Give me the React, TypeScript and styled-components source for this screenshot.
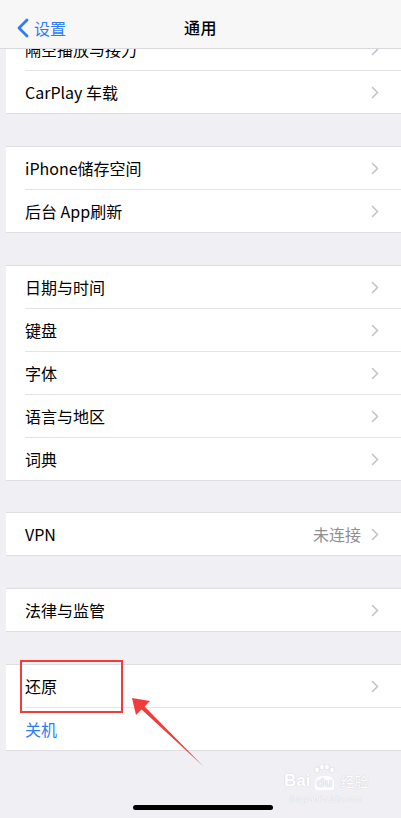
import React from "react";
import styled, { createGlobalStyle } from "styled-components";

type RowItem = {
  label: string;
  detail?: string;
  action?: boolean;
};

type GroupItem = {
  gap: number;
  rows: RowItem[];
};

const groups: GroupItem[] = [
  { gap: 32, rows: [{ label: "iPhone储存空间" }, { label: "后台 App刷新" }] },
  {
    gap: 32,
    rows: [
      { label: "日期与时间" },
      { label: "键盘" },
      { label: "字体" },
      { label: "语言与地区" },
      { label: "词典" },
    ],
  },
  { gap: 31, rows: [{ label: "VPN", detail: "未连接" }] },
  { gap: 32, rows: [{ label: "法律与监管" }] },
  { gap: 32, rows: [{ label: "还原" }, { label: "关机", action: true }] },
];

const GlobalStyle = createGlobalStyle`
  html, body {
    margin: 0;
    padding: 0;
    background: #efeff4;
  }
  * {
    box-sizing: border-box;
  }
`;

const Chevron = () => (
  <ChevronIcon width="8" height="13" viewBox="0 0 8 13">
    <path d="M1.5 1.5 L6.5 6.5 L1.5 11.5" fill="none" stroke="#c4c4c8" strokeWidth="1.6" strokeLinecap="round" strokeLinejoin="round" />
  </ChevronIcon>
);

const App = () => {
  return (
    <Page>
      <GlobalStyle />
      <NavBar>
        <BackButton>
          <svg width="14" height="20" viewBox="0 0 14 20">
            <path d="M11 2 L3 10 L11 18" fill="none" stroke="#2f7cf6" strokeWidth="2.8" strokeLinecap="round" strokeLinejoin="round" />
          </svg>
          <span>设置</span>
        </BackButton>
        <Title>通用</Title>
      </NavBar>

      <Group $gap={0} $first>
        <ClippedRow>
          <RowInner>
            <Label>隔空播放与接力</Label>
            <Chevron />
          </RowInner>
        </ClippedRow>
        <Row>
          <RowInner $last>
            <Label>CarPlay 车载</Label>
            <Chevron />
          </RowInner>
        </Row>
      </Group>

      {groups.map((group, gi) => (
        <Group key={gi} $gap={group.gap}>
          {group.rows.map((row, ri) => (
            <Row key={row.label}>
              <RowInner $last={ri === group.rows.length - 1}>
                <Label $action={row.action}>{row.label}</Label>
                {row.detail && <Detail>{row.detail}</Detail>}
                {!row.action && <Chevron />}
              </RowInner>
            </Row>
          ))}
        </Group>
      ))}

      <Highlight />
      <Arrow width="401" height="818" viewBox="0 0 401 818">
        <polygon points="132,698 150,701 144.6,706.4 203,766 141.6,709.6 136,715" fill="#f43b3b" />
      </Arrow>

      <Watermark>
        <WatermarkLogo>
          <span>Bai</span>
          <PawBox>
            <svg width="24" height="14" viewBox="0 0 24 14">
              <g fill="#fff" stroke="#dcdce2" strokeWidth="0.8">
                <ellipse cx="5" cy="6" rx="2.4" ry="3" />
                <ellipse cx="10" cy="3" rx="2.4" ry="3" />
                <ellipse cx="15" cy="3" rx="2.4" ry="3" />
                <ellipse cx="20" cy="6" rx="2.4" ry="3" />
              </g>
            </svg>
            <span>du</span>
          </PawBox>
          <WatermarkCn>经验</WatermarkCn>
        </WatermarkLogo>
        <WatermarkUrl>jingyan.baidu.com</WatermarkUrl>
      </Watermark>

      <HomeIndicator />
    </Page>
  );
};

export default App;

const Page = styled.div`
  position: relative;
  width: 401px;
  min-height: 818px;
  overflow: hidden;
  background: #efeff4;
  font-family: "Noto Sans CJK SC", "Noto Sans", sans-serif;
  color: #000;
`;

const NavBar = styled.header`
  position: relative;
  z-index: 1;
  height: 49px;
  display: flex;
  align-items: center;
  justify-content: center;
  background: #f7f7f8;
  border-bottom: 1px solid #dadade;
`;

const BackButton = styled.div`
  position: absolute;
  left: 16px;
  top: 18px;
  display: flex;
  align-items: center;
  gap: 4px;
  color: #2f7cf6;
  font-size: 16px;
  line-height: 20px;
`;

const Title = styled.h1`
  margin: 0;
  margin-top: 6px;
  font-size: 16px;
  font-weight: 500;
  letter-spacing: 0.5px;
`;

const Group = styled.section<{ $gap: number; $first?: boolean }>`
  margin-top: ${(p) => p.$gap}px;
  margin-left: 6px;
  background: #fff;
  border-top: ${(p) => (p.$first ? "none" : "1px solid #dedee2")};
  border-bottom: 1px solid #dedee2;
`;

const Row = styled.div`
  padding-left: 19px;
`;

const ClippedRow = styled.div`
  height: 22px;
  overflow: hidden;
  padding-left: 19px;
  display: flex;
  flex-direction: column;
  justify-content: flex-end;

  & > div {
    flex-shrink: 0;
  }
`;

const RowInner = styled.div<{ $last?: boolean }>`
  height: ${(p) => (p.$last ? "42px" : "43px")};
  display: flex;
  align-items: center;
  padding-right: 22px;
  border-bottom: ${(p) => (p.$last ? "none" : "1px solid #e4e4e8")};
`;

const Label = styled.span<{ $action?: boolean }>`
  flex: 1;
  font-size: 16px;
  color: ${(p) => (p.$action ? "#2f7cf6" : "#000")};
`;

const Detail = styled.span`
  font-size: 16px;
  color: #8e8e93;
  margin-right: 10px;
`;

const ChevronIcon = styled.svg`
  flex-shrink: 0;
`;

const Highlight = styled.div`
  position: absolute;
  left: 20px;
  top: 660px;
  width: 103px;
  height: 53px;
  border: 2.5px solid #f23c3c;
`;

const Arrow = styled.svg`
  position: absolute;
  left: 0;
  top: 0;
  pointer-events: none;
`;

const Watermark = styled.div`
  position: absolute;
  left: 284px;
  top: 764px;
  display: flex;
  flex-direction: column;
  align-items: center;
  color: #fff;
  text-shadow: 0 0 1px #d0d0d6, 0 0 1px #d0d0d6;
`;

const WatermarkLogo = styled.div`
  display: flex;
  align-items: flex-end;
  font-family: "Liberation Sans", Arial, sans-serif;
  font-size: 17px;
  font-weight: 700;
  line-height: 18px;
`;

const PawBox = styled.div`
  display: flex;
  flex-direction: column;
  align-items: center;
  margin: 0 2px;

  svg {
    margin-bottom: -2px;
  }

  span {
    background: #fff;
    color: #efeff4;
    border-radius: 7px 7px 3px 3px;
    padding: 0 2px;
    font-size: 13px;
    line-height: 14px;
  }
`;

const WatermarkCn = styled.span`
  font-family: "Noto Sans CJK SC", sans-serif;
  font-size: 14px;
  font-weight: 400;
  margin-left: 2px;
`;

const WatermarkUrl = styled.span`
  font-family: "Liberation Sans", Arial, sans-serif;
  font-size: 9px;
  line-height: 12px;
  margin-top: 3px;
`;

const HomeIndicator = styled.div`
  position: absolute;
  left: 133px;
  bottom: 8px;
  width: 140px;
  height: 5px;
  border-radius: 3px;
  background: #000;
`;
